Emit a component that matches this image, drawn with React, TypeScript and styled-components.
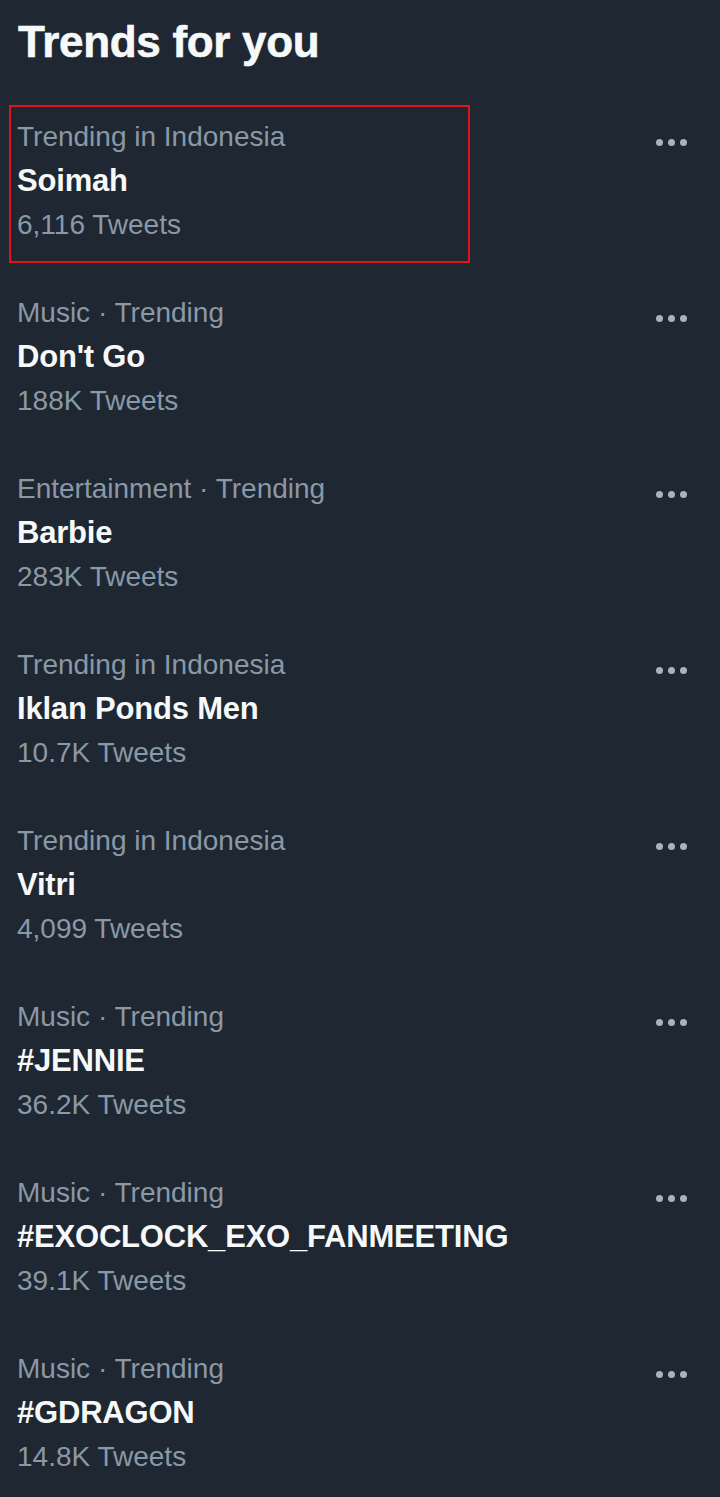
import React from "react";
import styled, { createGlobalStyle } from "styled-components";

const Global = createGlobalStyle`
  html, body { margin: 0; padding: 0; background: #1e2732; }
  body { font-family: "Liberation Sans", Arial, sans-serif; }
`;

const Panel = styled.div`
  width: 720px;
  min-height: 1497px;
  background: #1e2732;
  box-sizing: border-box;
`;

const Heading = styled.h2`
  margin: 0;
  height: 92px;
  box-sizing: border-box;
  padding: 16px 0 0 18px;
  font-size: 44px;
  line-height: 52px;
  font-weight: 700;
  color: #f7f9f9;
  letter-spacing: -0.3px;
  -webkit-text-stroke: 0.6px #f7f9f9;
`;

const List = styled.div`
  display: flex;
  flex-direction: column;
`;

const Row = styled.div`
  position: relative;
  height: 176px;
  box-sizing: border-box;
  padding: 23px 33px 21px 17px;
  display: flex;
  justify-content: space-between;
  align-items: flex-start;
`;

const Info = styled.div`
  display: flex;
  flex-direction: column;
`;

const Meta = styled.div`
  font-size: 28px;
  line-height: 44px;
  color: #8b98a5;
`;

const Title = styled.div`
  font-size: 31px;
  line-height: 44px;
  font-weight: 700;
  color: #f7f9f9;
  letter-spacing: -0.2px;
`;

const More = styled.div`
  display: flex;
  gap: 5px;
  margin-top: 24px;
`;

const Dot = styled.span`
  width: 7px;
  height: 7px;
  border-radius: 50%;
  background: #a9b3bd;
`;

const Highlight = styled.div`
  position: absolute;
  left: 9px;
  top: 13px;
  width: 461px;
  height: 158px;
  box-sizing: border-box;
  border: 2px solid #e0141b;
  pointer-events: none;
`;

const trends = [
  { meta: "Trending in Indonesia", title: "Soimah", count: "6,116 Tweets", mark: true },
  { meta: "Music · Trending", title: "Don't Go", count: "188K Tweets" },
  { meta: "Entertainment · Trending", title: "Barbie", count: "283K Tweets" },
  { meta: "Trending in Indonesia", title: "Iklan Ponds Men", count: "10.7K Tweets" },
  { meta: "Trending in Indonesia", title: "Vitri", count: "4,099 Tweets" },
  { meta: "Music · Trending", title: "#JENNIE", count: "36.2K Tweets" },
  { meta: "Music · Trending", title: "#EXOCLOCK_EXO_FANMEETING", count: "39.1K Tweets" },
  { meta: "Music · Trending", title: "#GDRAGON", count: "14.8K Tweets" },
];

export default function App() {
  return (
    <>
      <Global />
      <Panel>
        <Heading>Trends for you</Heading>
        <List>
          {trends.map((t, i) => (
            <Row key={i}>
              <Info>
                <Meta>{t.meta}</Meta>
                <Title>{t.title}</Title>
                <Meta>{t.count}</Meta>
              </Info>
              <More>
                <Dot />
                <Dot />
                <Dot />
              </More>
              {t.mark && <Highlight />}
            </Row>
          ))}
        </List>
      </Panel>
    </>
  );
}
